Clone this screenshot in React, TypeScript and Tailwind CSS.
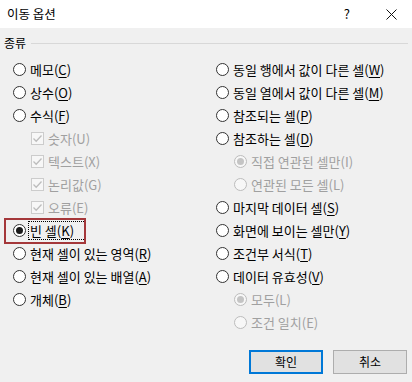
import React from 'react';

type Item = {
    label: string;
    key: string;
    kind: 'radio' | 'check' | 'sub';
    checked?: boolean;
    disabled?: boolean;
    focus?: boolean;
};

const leftItems: Item[] = [
    { label: '메모', key: 'C', kind: 'radio' },
    { label: '상수', key: 'O', kind: 'radio' },
    { label: '수식', key: 'F', kind: 'radio' },
    { label: '숫자', key: 'U', kind: 'check', checked: true, disabled: true },
    { label: '텍스트', key: 'X', kind: 'check', checked: true, disabled: true },
    { label: '논리값', key: 'G', kind: 'check', checked: true, disabled: true },
    { label: '오류', key: 'E', kind: 'check', checked: true, disabled: true },
    { label: '빈 셀', key: 'K', kind: 'radio', checked: true, focus: true },
    { label: '현재 셀이 있는 영역', key: 'R', kind: 'radio' },
    { label: '현재 셀이 있는 배열', key: 'A', kind: 'radio' },
    { label: '개체', key: 'B', kind: 'radio' },
];

const rightItems: Item[] = [
    { label: '동일 행에서 값이 다른 셀', key: 'W', kind: 'radio' },
    { label: '동일 열에서 값이 다른 셀', key: 'M', kind: 'radio' },
    { label: '참조되는 셀', key: 'P', kind: 'radio' },
    { label: '참조하는 셀', key: 'D', kind: 'radio' },
    { label: '직접 연관된 셀만', key: 'I', kind: 'sub', checked: true, disabled: true },
    { label: '연관된 모든 셀', key: 'L', kind: 'sub', disabled: true },
    { label: '마지막 데이터 셀', key: 'S', kind: 'radio' },
    { label: '화면에 보이는 셀만', key: 'Y', kind: 'radio' },
    { label: '조건부 서식', key: 'T', kind: 'radio' },
    { label: '데이터 유효성', key: 'V', kind: 'radio' },
    { label: '모두', key: 'L', kind: 'sub', checked: true, disabled: true },
    { label: '조건 일치', key: 'E', kind: 'sub', disabled: true },
];

const Radio = ({ checked, disabled }: { checked?: boolean; disabled?: boolean }) => (
    <span
        className={`w-[13px] h-[13px] rounded-full border flex items-center justify-center shrink-0 ${
            disabled ? 'border-[#bcbcbc] bg-[#f7f7f7]' : 'border-[#333333] bg-white'
        }`}
    >
        {checked && (
            <span className={`w-[7px] h-[7px] rounded-full ${disabled ? 'bg-[#c4c4c4]' : 'bg-[#1a1a1a]'}`} />
        )}
    </span>
);

const Check = () => (
    <span className="w-[13px] h-[13px] border border-[#cccccc] bg-[#f7f7f7] flex items-center justify-center shrink-0">
        <svg width="11" height="11" viewBox="0 0 11 11">
            <path d="M1.5 5.5 L4.2 8.2 L9.5 2.5" fill="none" stroke="#bdbdbd" strokeWidth="1.3" />
        </svg>
    </span>
);

const Row = ({ item }: { item: Item }) => {
    const indent = item.kind === 'check' || item.kind === 'sub';
    return (
        <div className={`relative h-[23px] flex items-center gap-[4px] ${indent ? 'pl-[18px]' : ''}`}>
            {item.focus && (
                <div className="absolute left-[-9px] top-[-1px] w-[82px] h-[26px] border-2 border-[#a4373a]" />
            )}
            {item.kind === 'check' ? <Check /> : <Radio checked={item.checked} disabled={item.disabled} />}
            <span
                className={`whitespace-nowrap text-[13px] ${
                    item.disabled ? 'text-[#a0a0a0]' : 'text-black'
                } ${
                    item.focus
                        ? 'h-[19px] leading-[17px] border border-dotted border-black pl-[1px] pr-[11px] -ml-[2px]'
                        : 'leading-[17px]'
                }`}
            >
                {item.label}(
                {item.disabled ? item.key : <span className="underline underline-offset-2">{item.key}</span>})
            </span>
        </div>
    );
};

export default function App() {
    return (
        <div
            className="w-[412px] h-[382px] bg-[#f0f0f0] text-[12px] text-black flex flex-col"
            style={{ fontFamily: '"Noto Sans CJK KR", "Noto Sans", sans-serif' }}
        >
            {/* Title bar */}
            <div className="h-[28px] bg-white flex items-center pl-[7px] pr-[15px] shrink-0">
                <span className="text-[12.5px] flex-1">이동 옵션</span>
                <span className="text-[13px] mr-[36px]">?</span>
                <svg width="11" height="11" viewBox="0 0 11 11">
                    <path d="M0.5 0.5 L10.5 10.5 M10.5 0.5 L0.5 10.5" stroke="#111" strokeWidth="1" />
                </svg>
            </div>

            {/* Group header */}
            <div className="h-[30px] flex items-center pl-[4px] pr-[4px] gap-[5px] shrink-0">
                <span>종류</span>
                <div className="flex-1 h-px bg-[#d8d8d8]" />
            </div>

            {/* Options */}
            <div className="flex">
                <div className="w-[203px] pl-[13px] flex flex-col">
                    {leftItems.map((it, i) => (
                        <Row key={i} item={it} />
                    ))}
                </div>
                <div className="flex-1 pl-[13px] flex flex-col">
                    {rightItems.map((it, i) => (
                        <Row key={i} item={it} />
                    ))}
                </div>
            </div>

            {/* Buttons */}
            <div className="mt-auto mb-[8px] flex justify-end gap-[10px] pr-[5px]">
                <button className="w-[74px] h-[24px] bg-[#e1e1e1] border-2 border-[#0078d7] flex items-center justify-center">
                    확인
                </button>
                <button className="w-[74px] h-[24px] bg-[#e1e1e1] border border-[#adadad] flex items-center justify-center">
                    취소
                </button>
            </div>
        </div>
    );
}
